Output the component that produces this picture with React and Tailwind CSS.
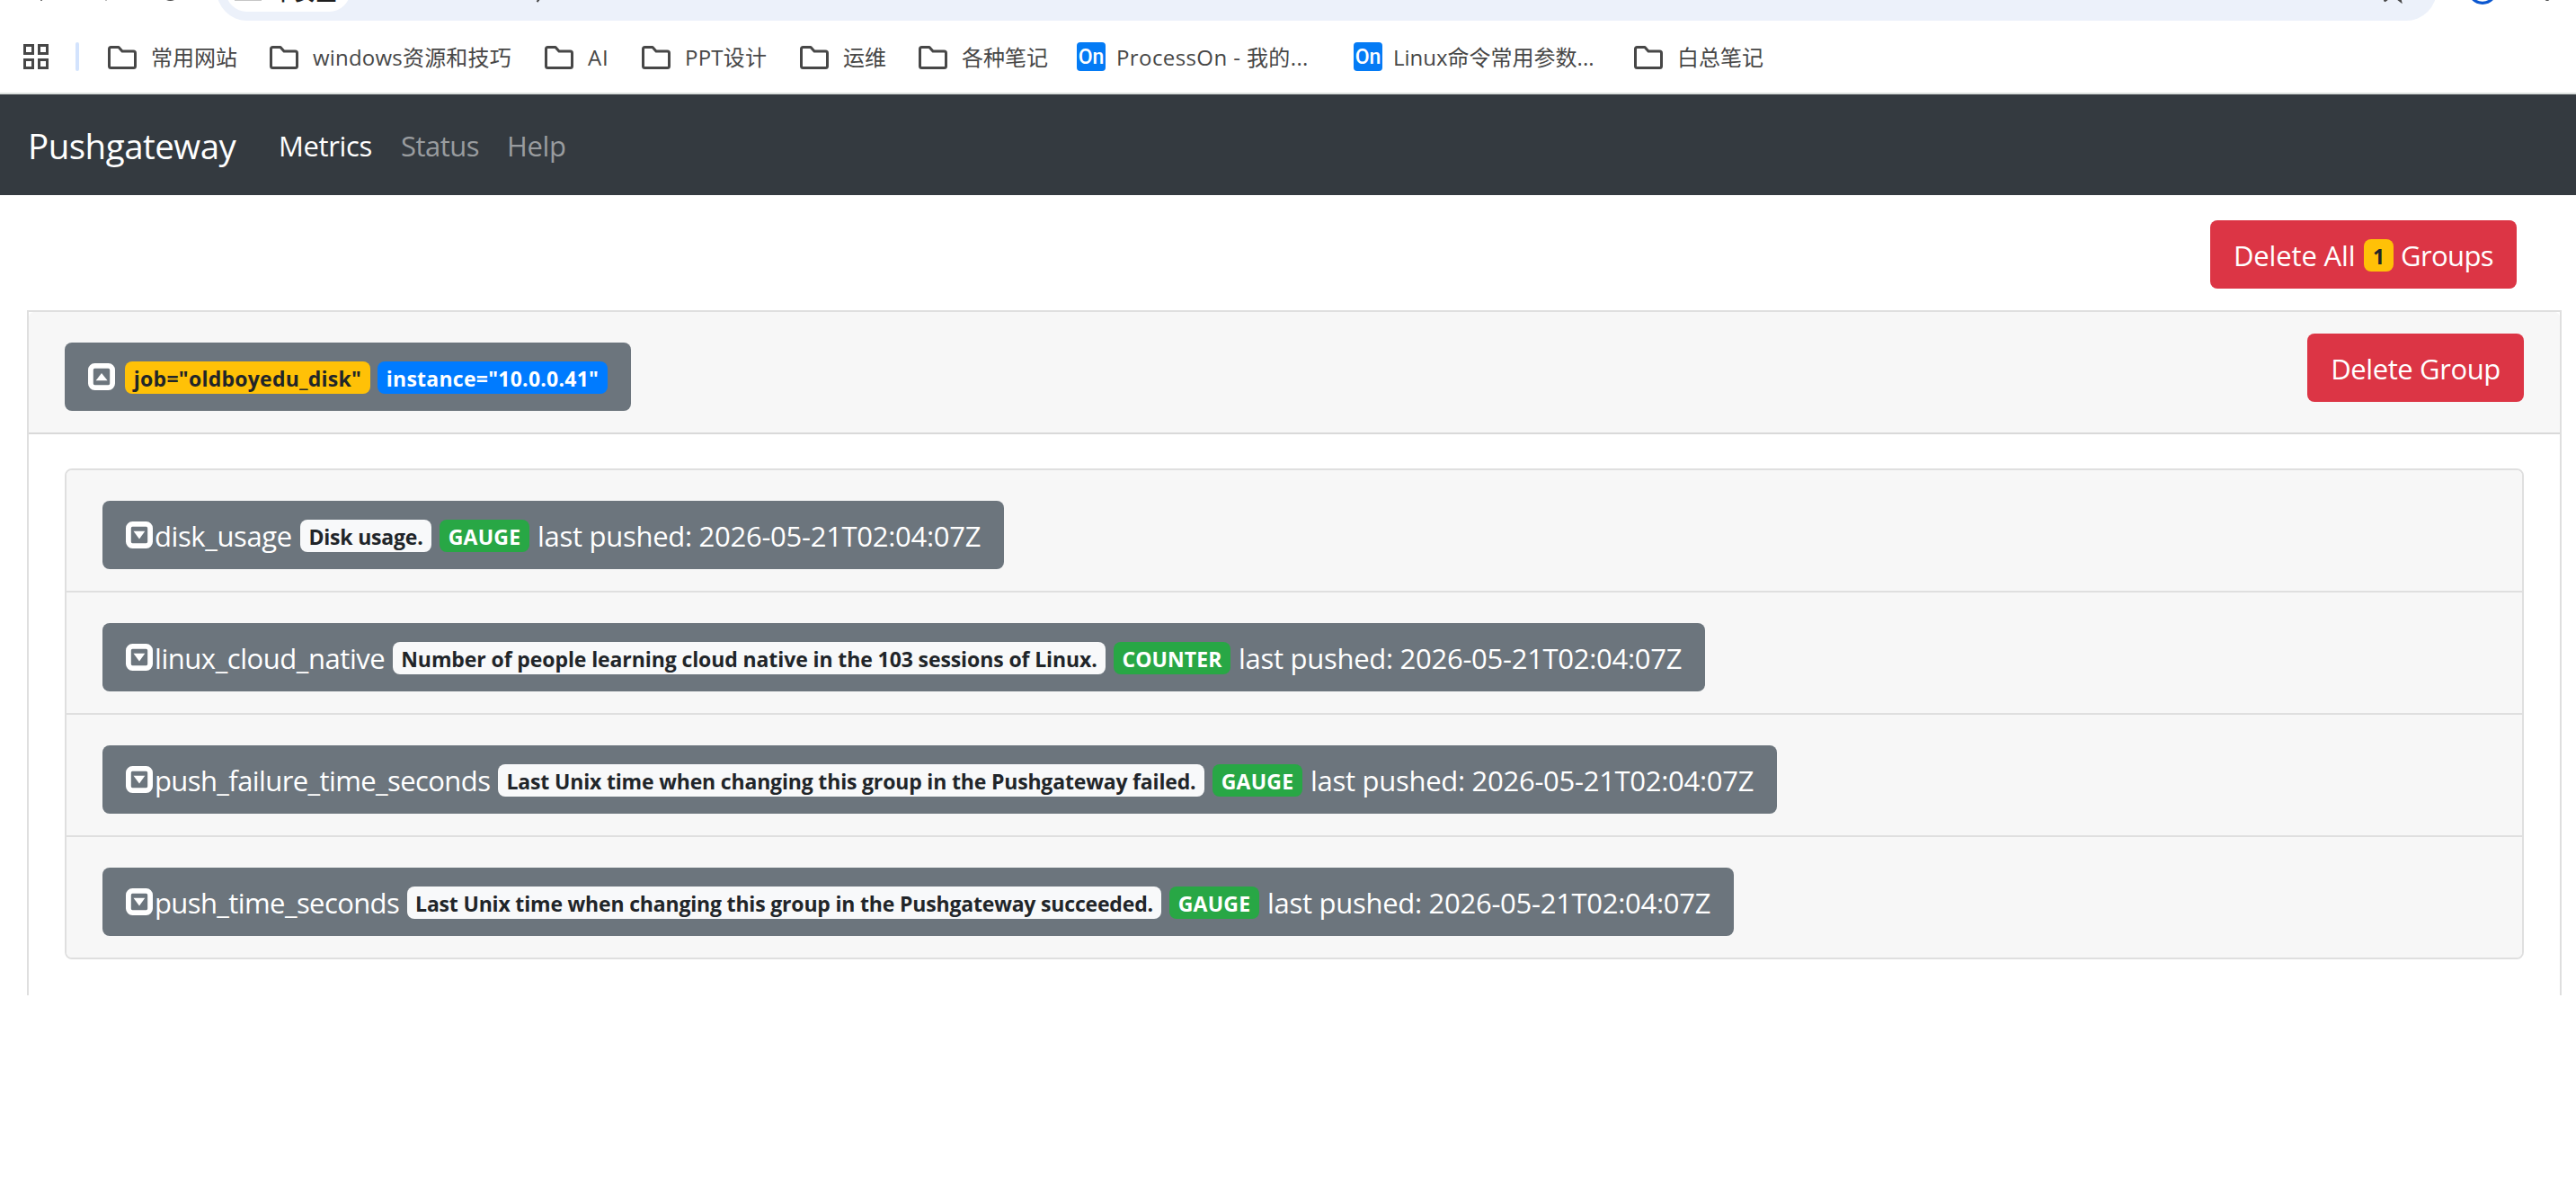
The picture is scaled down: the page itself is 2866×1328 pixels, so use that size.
import React from 'react';

const bookmarks = [
  { label: '常用网站', width: 'w-[96px]', gap: 'mr-[36px]' },
  { label: 'windows资源和技巧', width: 'w-[222px]', gap: 'mr-[36px]', text: 'tracking-[0.2px]' },
  { label: 'AI', width: 'w-[24px]', gap: 'mr-[36px]', text: 'tracking-[0.8px]' },
  { label: 'PPT设计', width: 'w-[92px]', gap: 'mr-[36px]', text: 'tracking-[0.2px]' },
  { label: '运维', width: 'w-[48px]', gap: 'mr-[36px]' },
  { label: '各种笔记', width: 'w-[96px]', gap: 'mr-[32px]' },
  { label: 'ProcessOn - 我的...', width: 'w-[214px]', gap: 'mr-[50px]', site: true, text: 'tracking-[0.4px]' },
  { label: 'Linux命令常用参数...', width: 'w-[224px]', gap: 'mr-[44px]', site: true },
  { label: '白总笔记', width: 'w-[96px]', gap: '' },
];

const metrics = [
  {
    name: 'disk_usage',
    nameClass: 'w-[153px] tracking-[-0.4px]',
    help: 'Disk usage.',
    helpClass: 'w-[146px] tracking-[-0.2px]',
    type: 'GAUGE',
    typeClass: 'w-[100px] tracking-[0.2px]',
  },
  {
    name: 'linux_cloud_native',
    nameClass: 'w-[256px] tracking-[-0.45px]',
    help: 'Number of people learning cloud native in the 103 sessions of Linux.',
    helpClass: 'w-[793px] tracking-[-0.1px]',
    type: 'COUNTER',
    typeClass: 'w-[130px] tracking-[0.1px]',
  },
  {
    name: 'push_failure_time_seconds',
    nameClass: 'w-[373px] tracking-[-0.6px]',
    help: 'Last Unix time when changing this group in the Pushgateway failed.',
    helpClass: 'w-[786px] tracking-[-0.17px]',
    type: 'GAUGE',
    typeClass: 'w-[100px] tracking-[0.2px]',
  },
  {
    name: 'push_time_seconds',
    nameClass: 'w-[272px] tracking-[-0.6px]',
    help: 'Last Unix time when changing this group in the Pushgateway succeeded.',
    helpClass: 'w-[839px] tracking-[-0.18px]',
    type: 'GAUGE',
    typeClass: 'w-[100px] tracking-[0.2px]',
  },
];

const FolderIcon = () => (
  <svg className="h-8 w-8 shrink-0" viewBox="0 0 32 32" fill="none" stroke="#474747" strokeWidth="3" strokeLinejoin="round">
    <path d="M3.5 5.5h8.5l4 4.5h12.5q2 0 2 2v14.5q0 2-2 2h-25q-2 0-2-2v-19q0-2 2-2z" />
  </svg>
);

const AppsIcon = () => (
  <svg className="h-7 w-7 shrink-0" viewBox="0 0 28 28" fill="none" stroke="#474747" strokeWidth="3">
    <rect x="1.5" y="1.5" width="9" height="9" />
    <rect x="17.5" y="1.5" width="9" height="9" />
    <rect x="1.5" y="17.5" width="9" height="9" />
    <rect x="17.5" y="17.5" width="9" height="9" />
  </svg>
);

const SiteIcon = () => (
  <span className="flex h-8 w-8 shrink-0 items-center justify-center rounded-[4px] bg-[#047bf5] font-['Roboto',sans-serif] text-[23px] font-medium leading-none text-white">
    On
  </span>
);

const ToggleIcon = ({ open }) => (
  <svg className="mb-0.5 h-[30px] w-[30px] shrink-0" viewBox="0 0 30 30">
    <rect x="2.9" y="2.9" width="24.2" height="24.2" rx="4.5" fill="none" stroke="white" strokeWidth="5.8" />
    <path d={open ? 'M8.7 19.3 15 11l6.6 8.3z' : 'M8.5 10.8h12.8L15 19.6z'} fill="white" />
  </svg>
);

const Badge = ({ className, children }) => (
  <span className={`flex h-9 shrink-0 items-center justify-center rounded-lg pt-0.5 text-[23px] font-bold leading-none ${className}`}>
    {children}
  </span>
);

const Toolbar = () => (
  <div className="flex h-[23px] items-end overflow-hidden">
    <svg className="h-[23px] w-[241px] shrink-0" viewBox="0 0 241 23">
      <rect x="45" y="0" width="2" height="1" fill="#777" />
      <rect x="117" y="0" width="2" height="1" fill="#bbb" />
      <path d="M185 0h9q-4.500 2-9 0z" fill="#474747" />
    </svg>
    <div className="flex h-[68px] w-[2470px] shrink-0 items-center rounded-[34px] bg-[#ecf1fa] pl-[10px]">
      <div className="flex h-12 w-[139px] items-center rounded-full bg-white pl-[10px]">
        <svg className="h-6 w-[30px] shrink-0" viewBox="0 0 30 24">
          <rect x="0" y="22" width="30" height="2" fill="#c6c6c6" />
        </svg>
        <span className="ml-3 whitespace-nowrap pt-1 text-[24px] font-medium leading-none text-[#1f1f1f]">不安全</span>
      </div>
      <svg className="ml-[204px] h-7 w-2" viewBox="0 0 8 28">
        <path d="M6 24 3.500 27" stroke="#474747" strokeWidth="2" />
      </svg>
      <svg className="ml-auto mr-[37px] h-[30px] w-6" viewBox="0 0 24 30">
        <path d="M3 27.500 12 20.500l9 7L19 19M3 27.500 5 19" fill="none" stroke="#474747" strokeWidth="2.200" />
      </svg>
    </div>
    <svg className="h-[23px] w-[155px] shrink-0" viewBox="0 0 155 23">
      <circle cx="51" cy="-12" r="15.3" fill="none" stroke="#0b57d0" strokeWidth="3.200" />
      <circle cx="123" cy="-1.500" r="2.600" fill="#474747" />
    </svg>
  </div>
);

const BookmarksBar = () => (
  <div className="flex h-[82px] items-center border-b-2 border-[#dde1df] pl-[26px] text-[24px] leading-none text-[#474747]">
    <AppsIcon />
    <div className="ml-[30px] mr-8 h-8 w-1 rounded-full bg-[#d3e3fd]" />
    {bookmarks.map((b) => (
      <div key={b.label} className={`flex shrink-0 items-center ${b.gap}`}>
        {b.site ? <SiteIcon /> : <FolderIcon />}
        <span className={`whitespace-nowrap pt-0.5 ${b.site ? 'ml-3' : 'ml-4'} ${b.width} ${b.text || ''}`}>{b.label}</span>
      </div>
    ))}
  </div>
);

const Navbar = () => (
  <nav className="flex h-28 items-center bg-[#343a40] pl-[31px] text-[31px] leading-none">
    <a className="w-[279px] pt-0.5 text-[38.5px] tracking-[-0.5px] text-white">Pushgateway</a>
    <a className="w-[136px] pt-0.5 tracking-[-0.35px] text-white">Metrics</a>
    <a className="w-[118px] pt-0.5 tracking-[-0.5px] text-[#999c9f]">Status</a>
    <a className="pt-0.5 tracking-[-0.35px] text-[#999c9f]">Help</a>
  </nav>
);

const MetricRow = ({ metric }) => (
  <div className="flex h-[136px] items-start border-b-2 border-[#dfdfdf] bg-[#f7f7f7] pl-10 pt-[34px] last:h-[134px] last:border-b-0">
    <button className="flex h-[76px] items-center whitespace-nowrap rounded-lg bg-[#6c757d] px-[26px] pt-0.5 leading-none text-white">
      <ToggleIcon />
      <span className={`ml-0.5 text-left ${metric.nameClass}`}>{metric.name}</span>
      <Badge className={`ml-[9px] bg-[#f8f9fa] text-[#212529] ${metric.helpClass}`}>{metric.help}</Badge>
      <Badge className={`ml-[9px] bg-[#28a745] text-white ${metric.typeClass}`}>{metric.type}</Badge>
      <span className="ml-[9px] w-[493px] text-left tracking-[-0.28px]">last pushed: 2026-05-21T02:04:07Z</span>
    </button>
  </div>
);

const App = () => {
  return (
    <div className="h-[1328px] w-[2866px] overflow-hidden bg-white font-['Open_Sans','Noto_Sans_CJK_SC',sans-serif]">
      <Toolbar />
      <BookmarksBar />
      <Navbar />

      <main className="pl-[30px] pr-4 pt-7 text-[31px]">
        <div className="flex justify-end pr-[50px]">
          <button className="flex h-[76px] w-[341px] items-center whitespace-nowrap rounded-lg bg-[#dc3545] pl-[26px] pt-0.5 leading-none text-white">
            <span className="w-[136px] text-left tracking-[-0.15px]">Delete All</span>
            <Badge className="ml-[9px] w-[33px] bg-[#ffc107] text-[#212529]">1</Badge>
            <span className="ml-2 tracking-[-0.6px]">Groups</span>
          </button>
        </div>

        {/* Metric group */}
        <div className="mt-6 border-2 border-b-0 border-[#dfdfdf]">
          <div className="flex h-[136px] items-start justify-between rounded-t-md border-b-2 border-[#d9d9d9] bg-[#f7f7f7] px-10 pt-6">
            <button className="mt-2.5 flex h-[76px] items-center whitespace-nowrap rounded-lg bg-[#6c757d] px-[26px] pt-0.5 leading-none">
              <ToggleIcon open />
              <Badge className="ml-[11px] w-[273px] bg-[#ffc107] tracking-[0.25px] text-[#212529]">job="oldboyedu_disk"</Badge>
              <Badge className="ml-2 w-[256px] bg-[#007bff] tracking-[0.25px] text-white">instance="10.0.0.41"</Badge>
            </button>
            <button className="flex h-[76px] w-[241px] items-center justify-center whitespace-nowrap rounded-lg bg-[#dc3545] pt-0.5 leading-none tracking-[-0.4px] text-white">
              Delete Group
            </button>
          </div>

          <div className="px-10 pb-10 pt-[38px]">
            <div className="overflow-hidden rounded-lg border-2 border-[#dfdfdf]">
              {metrics.map((metric) => (
                <MetricRow key={metric.name} metric={metric} />
              ))}
            </div>
          </div>
        </div>
      </main>
    </div>
  );
};

export default App;
